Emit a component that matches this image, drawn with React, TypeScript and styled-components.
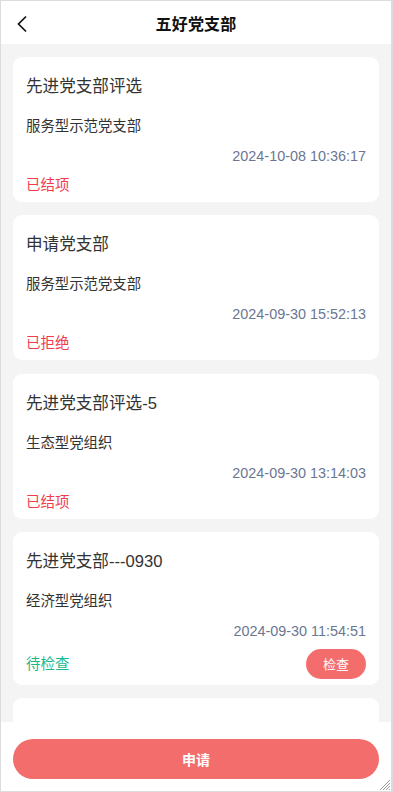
import React from "react";
import styled, { createGlobalStyle } from "styled-components";

const Global = createGlobalStyle`
  html, body { margin: 0; padding: 0; background: #fff; }
  * { box-sizing: border-box; }
  body { font-family: "Liberation Sans", "Noto Sans CJK SC", sans-serif; }
`;

const Frame = styled.div`
  position: relative;
  width: 393px;
  height: 792px;
  border-style: solid;
  border-color: #dcdcdc;
  border-width: 1px 2px 1px 1px;
  display: flex;
  flex-direction: column;
  overflow: hidden;
  background: #f4f4f4;
`;

const Header = styled.div`
  height: 43px;
  flex: none;
  background: #fff;
  display: flex;
  align-items: center;
  justify-content: center;
  position: relative;
`;

const Back = styled.button`
  position: absolute;
  left: 11px;
  top: 12px;
  width: 20px;
  height: 22px;
  border: 0;
  padding: 0;
  background: transparent;
  display: flex;
  align-items: center;
  justify-content: center;
`;

const Title = styled.h1`
  margin: 0;
  font-size: 16px;
  font-weight: 700;
  color: #111;
  letter-spacing: 0.2px;
`;

const List = styled.div`
  flex: 1;
  overflow: hidden;
  padding: 13px 12px 0;
  display: flex;
  flex-direction: column;
  gap: 13.3px;
`;

const Card = styled.div<{ $empty?: boolean }>`
  flex: none;
  background: #fff;
  border-radius: 9px;
  padding: 17px 13px 6px;
  display: flex;
  flex-direction: column;
  min-height: ${(p) => (p.$empty ? "145px" : "0")};
`;

const CardTitle = styled.div`
  font-size: 16.6px;
  line-height: 26px;
  color: #333;
  margin-bottom: 15px;
`;

const Sub = styled.div`
  font-size: 14.4px;
  line-height: 22px;
  color: #333;
  margin-bottom: 8px;
`;

const Time = styled.div`
  font-size: 14.4px;
  line-height: 22px;
  color: #6b7791;
  text-align: right;
  margin-bottom: 7px;
`;

const Foot = styled.div`
  display: flex;
  align-items: center;
  justify-content: space-between;
  min-height: 22px;
`;

const Status = styled.span<{ $tone: "red" | "green" }>`
  font-size: 14.5px;
  line-height: 22px;
  color: ${(p) => (p.$tone === "red" ? "#f23c4c" : "#19b98a")};
`;

const SmallBtn = styled.button`
  width: 60px;
  height: 30px;
  border: 0;
  border-radius: 15px;
  background: #f36d6d;
  color: #fff;
  font-size: 13px;
  font-family: inherit;
  padding: 0;
`;

const Bottom = styled.div`
  flex: none;
  height: 69px;
  background: #fff;
  padding: 17px 12px 0;
`;

const MainBtn = styled.button`
  width: 100%;
  height: 40px;
  border: 0;
  border-radius: 20px;
  background: #f36d6d;
  color: #fff;
  font-size: 14px;
  font-weight: 700;
  font-family: inherit;
`;

const Grip = styled.svg`
  position: absolute;
  right: 0;
  bottom: 0;
`;

type Item = {
  title: string;
  sub: string;
  time: string;
  status: string;
  tone: "red" | "green";
  action?: string;
};

const items: Item[] = [
  { title: "先进党支部评选", sub: "服务型示范党支部", time: "2024-10-08 10:36:17", status: "已结项", tone: "red" },
  { title: "申请党支部", sub: "服务型示范党支部", time: "2024-09-30 15:52:13", status: "已拒绝", tone: "red" },
  { title: "先进党支部评选-5", sub: "生态型党组织", time: "2024-09-30 13:14:03", status: "已结项", tone: "red" },
  { title: "先进党支部---0930", sub: "经济型党组织", time: "2024-09-30 11:54:51", status: "待检查", tone: "green", action: "检查" },
];

export default function App() {
  return (
    <>
      <Global />
      <Frame>
        <Header>
          <Back aria-label="返回">
            <svg width="12" height="18" viewBox="0 0 12 18">
              <path d="M10 1.5 L2.5 9 L10 16.5" fill="none" stroke="#111" strokeWidth="1.7" />
            </svg>
          </Back>
          <Title>五好党支部</Title>
        </Header>
        <List>
          {items.map((it, i) => (
            <Card key={i}>
              <CardTitle>{it.title}</CardTitle>
              <Sub>{it.sub}</Sub>
              <Time>{it.time}</Time>
              <Foot>
                <Status $tone={it.tone}>{it.status}</Status>
                {it.action && <SmallBtn>{it.action}</SmallBtn>}
              </Foot>
            </Card>
          ))}
          <Card $empty />
        </List>
        <Bottom>
          <MainBtn>申请</MainBtn>
        </Bottom>
        <Grip width="14" height="14" viewBox="0 0 14 14">
          <path d="M13 3 L3 13 M13 6 L6 13 M13 9 L9 13 M13 12 L12 13" stroke="#999" strokeWidth="1" />
        </Grip>
      </Frame>
    </>
  );
}
